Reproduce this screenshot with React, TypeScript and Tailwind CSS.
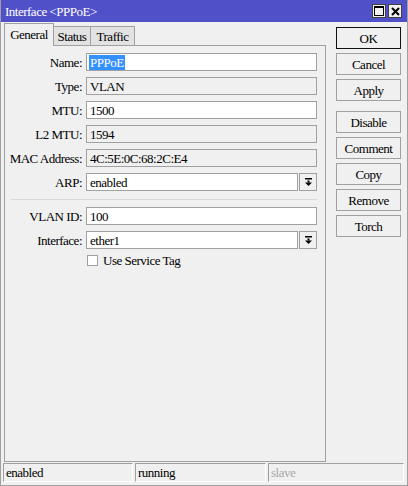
import React from "react";

const font = { fontFamily: '"Liberation Serif", "Times New Roman", serif' };

function DropIcon() {
  return (
    <svg width="9" height="9" viewBox="0 0 9 9">
      <rect x="1" y="0" width="7" height="1.5" fill="#000" />
      <rect x="3.5" y="2.5" width="2" height="2" fill="#000" />
      <polygon points="1,4.5 8,4.5 4.5,8" fill="#000" />
    </svg>
  );
}

function Row({ label, children, mt = "mt-[6px]" }: { label: string; children: React.ReactNode; mt?: string }) {
  return (
    <div className={`flex items-center h-[18px] ${mt}`}>
      <div className="w-[77px] text-right leading-none whitespace-nowrap">{label}</div>
      <div className="ml-[4px] flex items-center">{children}</div>
    </div>
  );
}

function Field({ value, readOnly, w = "w-[231px]", selected }: { value: string; readOnly?: boolean; w?: string; selected?: boolean }) {
  return (
    <div
      className={`${w} h-[18px] border border-[#a0a0a0] flex items-center pl-[2px] leading-none ${
        readOnly ? "bg-[#f0f0f0]" : "bg-white"
      }`}
    >
      {selected ? (
        <span className="bg-[#3390ff] text-white px-[1px] h-[15px] flex items-center">{value}</span>
      ) : (
        <span className="px-[1px]">{value}</span>
      )}
    </div>
  );
}

function Combo({ value }: { value: string }) {
  return (
    <div className="flex items-center">
      <Field value={value} w="w-[212px]" />
      <div className="ml-[1px] w-[18px] h-[18px] border border-[#a0a0a0] bg-[#f0f0f0] flex items-center justify-center">
        <DropIcon />
      </div>
    </div>
  );
}

function Btn({ label, primary, mt = "mt-[4px]" }: { label: string; primary?: boolean; mt?: string }) {
  return (
    <div
      className={`w-[65px] h-[22px] flex items-center justify-center bg-[#f0f0f0] leading-none ${mt} ${
        primary ? "border border-[#101010]" : "border border-[#a0a0a0]"
      }`}
    >
      {label}
    </div>
  );
}

export default function App() {
  return (
    <div
      className="w-[408px] h-[486px] bg-[#f0f0f0] flex flex-col border-l border-r border-b border-[#a0a0a0] text-[13px] tracking-[-0.5px] text-black overflow-hidden"
      style={font}
    >
      {/* Title bar */}
      <div className="h-[22px] bg-[#5050c8] flex items-center pl-[4px] pr-[5px] shrink-0">
        <div className="text-white leading-none flex-1">Interface &lt;PPPoE&gt;</div>
        <div className="flex gap-[2px]">
          <div className="w-[14px] h-[14px] bg-[#f0f0f0] border border-[#404040] flex items-center justify-center">
            <svg width="10" height="10" viewBox="0 0 10 10">
              <rect x="0.5" y="0.5" width="9" height="9" fill="none" stroke="#000" />
              <rect x="0" y="0" width="10" height="2" fill="#000" />
            </svg>
          </div>
          <div className="w-[14px] h-[14px] bg-[#f0f0f0] border border-[#404040] flex items-center justify-center">
            <svg width="9" height="9" viewBox="0 0 9 9">
              <path d="M1 1 L8 8 M8 1 L1 8" stroke="#000" strokeWidth="2" />
            </svg>
          </div>
        </div>
      </div>

      {/* Body */}
      <div className="flex h-[440px] shrink-0">
        {/* Left: tabs + panel */}
        <div className="ml-[3px] w-[322px] flex flex-col">
          <div className="flex items-end h-[22px] mt-[1px] relative z-10">
            <div className="w-[50px] border-l border-t border-r border-[#a0a0a0] bg-[#f0f0f0] flex items-center justify-center leading-none pb-[1px] -mb-[1px] h-[23px]">
              General
            </div>
            <div className="h-[19px] w-[37px] border-t border-r border-[#a0a0a0] bg-[#e2e2e2] flex items-center justify-center leading-none">
              Status
            </div>
            <div className="h-[19px] w-[44px] border-t border-r border-[#a0a0a0] bg-[#e2e2e2] flex items-center justify-center leading-none">
              Traffic
            </div>
          </div>
          <div className="h-[417px] border border-[#a0a0a0] flex flex-col pt-[7px]">
            <Row label="Name:" mt="mt-0">
              <Field value="PPPoE" selected />
            </Row>
            <Row label="Type:">
              <Field value="VLAN" readOnly />
            </Row>
            <Row label="MTU:">
              <Field value="1500" />
            </Row>
            <Row label="L2 MTU:">
              <Field value="1594" readOnly />
            </Row>
            <Row label="MAC Address:">
              <Field value="4C:5E:0C:68:2C:E4" readOnly />
            </Row>
            <Row label="ARP:">
              <Combo value="enabled" />
            </Row>
            <div className="ml-[6px] w-[306px] mt-[8px] border-t border-[#d8d8d8] h-0" />
            <Row label="VLAN ID:" mt="mt-[7px]">
              <Field value="100" />
            </Row>
            <Row label="Interface:">
              <Combo value="ether1" />
            </Row>
            <div className="flex items-center h-[14px] mt-[4px] ml-[82px]">
              <div className="w-[11px] h-[11px] border border-[#a0a0a0] bg-white" />
              <div className="ml-[5px] leading-none">Use Service Tag</div>
            </div>
          </div>
        </div>

        {/* Right: buttons */}
        <div className="ml-[10px] flex flex-col pt-[5px]">
          <Btn label="OK" primary mt="mt-0" />
          <Btn label="Cancel" />
          <Btn label="Apply" />
          <Btn label="Disable" mt="mt-[10px]" />
          <Btn label="Comment" />
          <Btn label="Copy" />
          <Btn label="Remove" />
          <Btn label="Torch" />
        </div>
      </div>

      {/* Status bar */}
      <div className="flex ml-[2px] mt-[1px] h-[19px] gap-[2px]">
        <div className="w-[130px] h-full border-l border-t border-[#a0a0a0] border-r border-b border-r-white border-b-white flex items-center pl-[2px] leading-none">
          enabled
        </div>
        <div className="w-[131px] h-full border-l border-t border-[#a0a0a0] border-r border-b border-r-white border-b-white flex items-center pl-[2px] leading-none">
          running
        </div>
        <div className="w-[136px] h-full border-l border-t border-[#a0a0a0] border-r border-b border-r-white border-b-white flex items-center pl-[2px] leading-none text-[#a8a8a8]">
          slave
        </div>
      </div>
    </div>
  );
}
